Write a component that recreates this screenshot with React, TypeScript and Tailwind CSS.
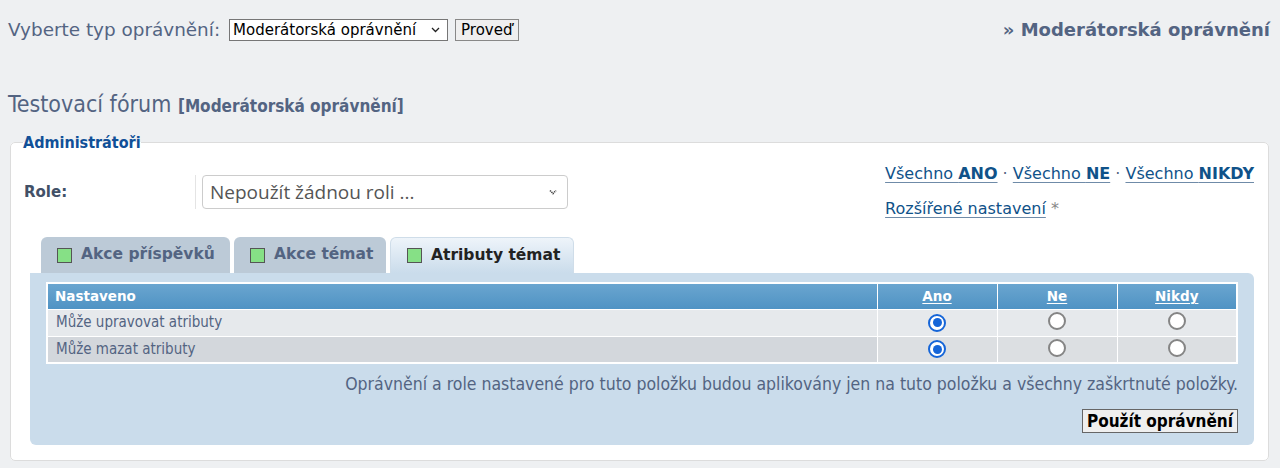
import React from 'react';

const rows = [
  { label: 'Může upravovat atributy', value: 'yes' },
  { label: 'Může mazat atributy', value: 'yes' },
];

const tabs = [
  { label: 'Akce příspěvků', active: false, w: 'w-[189px]' },
  { label: 'Akce témat', active: false, w: 'w-[152px]' },
  { label: 'Atributy témat', active: true, w: 'w-[184px]' },
];

function Radio({ checked }: { checked: boolean }) {
  if (checked) {
    return (
      <span className="inline-flex w-[18px] h-[18px] rounded-full border-[2.5px] border-[#1565d8] bg-white items-center justify-center">
        <span className="w-[9px] h-[9px] rounded-full bg-[#1565d8]" />
      </span>
    );
  }
  return <span className="inline-block w-[18px] h-[18px] rounded-full border-2 border-[#858585] bg-white" />;
}

export default function App() {
  return (
    <div className="min-h-screen bg-[#eef0f2] text-[#536482] font-['DejaVu_Sans',sans-serif]">
      <div className="flex items-center justify-between pl-2 pr-[10px] pt-[19px] h-[41px]">
        <div className="flex items-center">
          <span className="text-[18.4px] leading-[22px]">Vyberte typ oprávnění:</span>
          <div className="ml-[9px] flex items-center justify-between w-[219px] h-[22px] border border-[#767676] bg-white text-black text-[15px] pl-[3px] pr-[7px]">
            <span>Moderátorská oprávnění</span>
            <svg width="9" height="6" viewBox="0 0 9 6" fill="none">
              <path d="M1 1l3.5 3.5L8 1" stroke="#222" strokeWidth="1.3" />
            </svg>
          </div>
          <button className="ml-[7px] h-[22px] px-[5px] border border-[#888] bg-[#efefef] text-black text-[15px] leading-none">Proveď</button>
        </div>
        <span className="text-[18px] leading-[22px] font-bold">» Moderátorská oprávnění</span>
      </div>

      <h1 className="mt-[49px] pl-2 text-[#536482] font-['DejaVu_Sans_Condensed',sans-serif] text-[23px] leading-[28px]">
        Testovací fórum <span className="text-[17px] font-bold">[Moderátorská oprávnění]</span>
      </h1>

      <fieldset className="ml-[10px] mr-[11px] mt-[13px] bg-white border border-[#dcdcdc] rounded-[5px] pl-[13px] pr-[14px] pb-[15px]">
        <legend className="px-0 -ml-[1px] text-[16px] leading-[19px] font-bold text-[#115098] font-['DejaVu_Sans_Condensed',sans-serif]">Administrátoři</legend>

        <div className="flex justify-between">
          <div className="flex items-start pt-[23px]">
            <span className="w-[172px] h-[34px] flex items-center text-[15px] font-bold text-[#425067] border-r border-[#e4e4e4]">Role:</span>
            <div className="ml-[6px] w-[366px] h-[34px] border border-[#cccccc] rounded-[4px] flex items-center justify-between pl-[7px] pr-[10px] font-['Open_Sans',sans-serif] text-[19px] text-[#555]">
              <span>Nepoužít žádnou roli ...</span>
              <svg width="8" height="6" viewBox="0 0 8 6" fill="none">
                <path d="M1 1.5l3 3 3-3" stroke="#444" strokeWidth="1.6" strokeDasharray="1.2 0.8" />
              </svg>
            </div>
          </div>
          <div className="pt-[14px] text-[16px] text-[#105289] leading-none">
            <div>
              <a className="underline underline-offset-[3px] decoration-[#6f8ba8]">Všechno <b>ANO</b></a>
              <span className="text-[#536482]"> · </span>
              <a className="underline underline-offset-[3px] decoration-[#6f8ba8]">Všechno <b>NE</b></a>
              <span className="text-[#536482]"> · </span>
              <a className="underline underline-offset-[3px] decoration-[#6f8ba8]">Všechno <b>NIKDY</b></a>
            </div>
            <div className="mt-[19px]">
              <a className="underline underline-offset-[3px] decoration-[#6f8ba8]">Rozšířené nastavení</a>
              <span className="text-[#888]"> *</span>
            </div>
          </div>
        </div>

        <div className="mt-[20px] ml-[6px]">
          <div className="flex gap-[4px] pl-[11px]">
            {tabs.map((t) => (
              <div
                key={t.label}
                className={`${t.w} h-[36px] rounded-t-[6px] flex items-center gap-[9px] pl-[16px] text-[15.5px] font-bold ${
                  t.active
                    ? 'bg-gradient-to-b from-[#eef4fa] to-[#cadceb] text-[#222] border border-b-0 border-[#cfdde9]'
                    : 'bg-[#bccad7] text-[#536482]'
                }`}
              >
                <span className="w-[15px] h-[15px] bg-[#86e086] border border-[#555]" />
                {t.label}
              </div>
            ))}
          </div>
          <div className="bg-[#cadceb] rounded-[6px] rounded-tl-none px-[16px] pt-[9px] pb-[12px]">
            <table className="w-full border-collapse border-2 border-white text-[13.5px]">
              <thead>
                <tr className="h-[26px] bg-gradient-to-b from-[#6ba6d0] to-[#4f93c4] text-white font-bold">
                  <th className="text-left pl-[7px] border border-white font-bold">Nastaveno</th>
                  {['Ano', 'Ne', 'Nikdy'].map((h) => (
                    <th key={h} className="w-[120px] border border-white font-bold">
                      <span className="underline underline-offset-2">{h}</span>
                    </th>
                  ))}
                </tr>
              </thead>
              <tbody className="font-['DejaVu_Sans_Condensed',sans-serif]">
                {rows.map((r, i) => (
                  <tr key={r.label} className={`h-[27px] ${i === 0 ? 'bg-[#e6e9ec]' : 'bg-[#dcdfe2]'}`}>
                    <td className={`pl-[8px] border border-white text-[15px] text-[#536482] ${i === 1 ? 'bg-[#d3d7dc]' : ''}`}>{r.label}</td>
                    <td className="text-center border border-white align-middle leading-none">
                      <Radio checked />
                    </td>
                    <td className="text-center border border-white align-middle leading-none">
                      <Radio checked={false} />
                    </td>
                    <td className="text-center border border-white align-middle leading-none">
                      <Radio checked={false} />
                    </td>
                  </tr>
                ))}
              </tbody>
            </table>
            <p className="mt-[9px] text-right text-[17.5px] leading-[22px] font-['DejaVu_Sans_Condensed',sans-serif] text-[#536482]">
              Oprávnění a role nastavené pro tuto položku budou aplikovány jen na tuto položku a všechny zaškrtnuté položky.
            </p>
            <div className="flex justify-end mt-[14px]">
              <button className="h-[24px] px-[4px] border border-[#666] bg-[#efefef] text-black text-[17px] font-bold font-['DejaVu_Sans_Condensed',sans-serif] leading-none">
                Použít oprávnění
              </button>
            </div>
          </div>
        </div>
      </fieldset>
    </div>
  );
}
